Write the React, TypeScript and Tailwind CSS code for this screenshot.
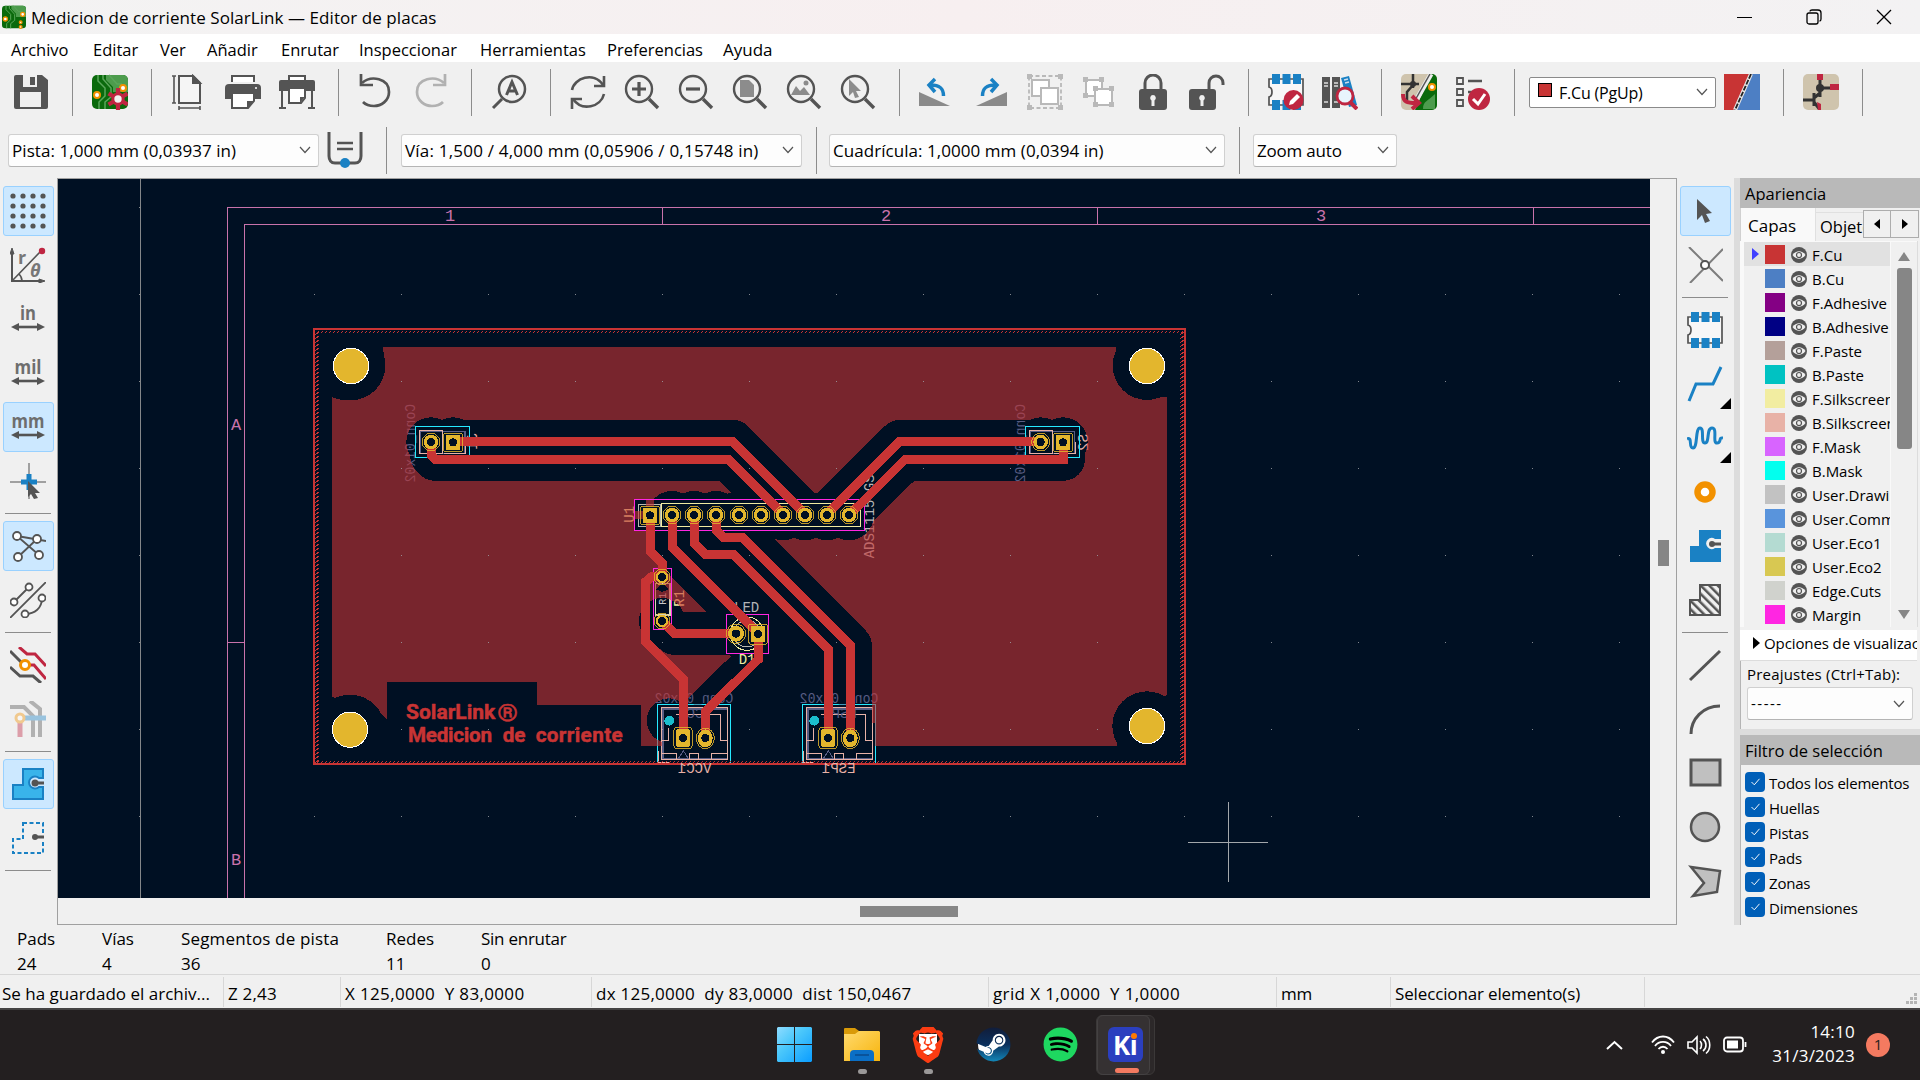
import React from "react";
import { FaSteam, FaSpotify } from "react-icons/fa";
import { SiBrave } from "react-icons/si";

const G = "#545454";
const B = "#1a81c4";
const R = "#bf2641";

function Ico({ children, dim, className = "" }: { children: React.ReactNode; dim?: boolean; className?: string }) {
  return (
    <svg viewBox="0 0 36 36" className={`h-9 w-9 shrink-0 ${dim ? "opacity-40" : ""} ${className}`} fill="none" stroke={G} strokeWidth="2">
      {children}
    </svg>
  );
}

/* ---------- top toolbar icons ---------- */
const SaveIcon = () => (
  <Ico>
    <path d="M1 3a2 2 0 0 1 2-2h26l6 5v27a2 2 0 0 1-2 2H3a2 2 0 0 1-2-2z" fill={G} stroke="none" />
    <path d="M10 1h14v12H10zM7 18h21v15H7z" fill="#efefef" stroke="none" />
    <path d="M17 3h5v8h-5z" fill={G} stroke="none" />
  </Ico>
);
const Traces = () => (
  <>
    <rect x="0" y="1" width="36" height="34" rx="5" fill="#0a6a0c" stroke="none" />
    <path d="M14 1v5l7 7v5h15V6a5 5 0 0 0-5-5z" fill="#4d9c4d" stroke="none" />
    <path d="M6 1v6l7 7v8l-6 6v7M11 1v4l8 9v9l-6 5v7M17 1l8 9h5" stroke="#5aa65a" strokeWidth="1.5" />
    <circle cx="5" cy="21" r="3" fill="#fff" stroke="#f29100" />
    <circle cx="31" cy="14" r="3" fill="#fff" stroke="#f29100" />
  </>
);
const BoardSetupIcon = () => (
  <Ico>
    <Traces />
    <g stroke={R} strokeWidth="4.200">
      <path d="M26 14v22M16.500 19.500l19 11M35.500 19.500l-19 11" />
    </g>
    <circle cx="26" cy="25" r="5.200" fill="#f2f2f2" stroke={R} strokeWidth="3" />
  </Ico>
);
const PageIcon = () => (
  <Ico>
    <g transform="translate(-2 0)">
      <path d="M10 2h14l7 7v20H10z" fill="#f5f5f5" />
      <path d="M24 2l7 7h-7z" fill={G} />
      <path d="M5 2v27M3 2h4M3 29h4M10 34h21M10 32v4M31 32v4" strokeWidth="1.6" />
    </g>
  </Ico>
);
const PrinterIcon = () => (
  <Ico>
    <path d="M7 8V2h22v6" fill="#fff" />
    <path d="M0 14a4 4 0 0 1 4-4h28a4 4 0 0 1 4 4v11H0z" fill={G} stroke="none" />
    <path d="M7 19h22v8l-6 7H7z" fill="#fff" />
    <path d="M29 27l-7 7v-7z" fill={G} stroke="none" />
    <circle cx="31" cy="14" r="1" fill="#fff" stroke="none" />
  </Ico>
);
const PlotterIcon = () => (
  <Ico>
    <path d="M10 8V2h16v6" fill="#fff" />
    <path d="M0 8a2 2 0 0 1 2-2h32a2 2 0 0 1 2 2v9H0z" fill={G} stroke="none" />
    <path d="M3 17v17M33 17v17M0 34h7M29 34h7" />
    <path d="M10 14h16v10l-4 5H10z" fill="#fff" />
    <path d="M26 23l-5 6v-6z" fill={G} stroke="none" />
  </Ico>
);
const UndoArrow = () => (
  <>
    <path d="M4 9C13 1 31 4 31 18c0 9-8 14-15 14-5 0-9-2-11-4" strokeWidth="2.700" />
    <path d="M3 0v11h12" strokeWidth="2.700" />
  </>
);
const UndoIcon = () => (
  <Ico>
    <UndoArrow />
  </Ico>
);
const RedoIcon = () => (
  <Ico dim>
    <g transform="translate(36 0) scale(-1 1)">
      <UndoArrow />
    </g>
  </Ico>
);
const FindIcon = () => (
  <Ico>
    <circle cx="21" cy="15" r="13" strokeWidth="2.500" />
    <path d="M11 25l-9 9" strokeWidth="3" />
    <path d="M15.500 21l5.500-13 5.500 13M17.500 17h7" strokeWidth="3" />
  </Ico>
);
const RefreshIcon = () => (
  <Ico>
    <path d="M2 16C4 4 24-3 33 11M34 20C31 33 12 38 3 25" strokeWidth="2.600" />
    <path d="M34 2v10H24M2 35V25h10" strokeWidth="2.600" />
  </Ico>
);
const Lens = ({ children }: { children: React.ReactNode }) => (
  <Ico>
    <circle cx="15" cy="15" r="13" strokeWidth="2.400" />
    <path d="M25 25l9 9" strokeWidth="3.400" />
    {children}
  </Ico>
);
const ZoomInIcon = () => (
  <Lens>
    <path d="M8 15h14M15 8v14" strokeWidth="3.200" />
  </Lens>
);
const ZoomOutIcon = () => (
  <Lens>
    <path d="M8 15h14" strokeWidth="3.200" />
  </Lens>
);
const ZoomPageIcon = () => (
  <Lens>
    <path d="M8 6h9l5 5v12H8z" fill="#8c8c8c" stroke="none" />
  </Lens>
);
const ZoomObjIcon = () => (
  <Lens>
    <path d="M5 21l5-9 4 5 4-4 6 8z" fill="#8c8c8c" stroke="none" />
    <circle cx="20" cy="9" r="2.500" fill="#8c8c8c" stroke="none" />
  </Lens>
);
const ZoomSelIcon = () => (
  <Lens>
    <path d="M9 5l12 12h-5l3 6-4 1-2-6-4 4z" fill="#8c8c8c" stroke="none" />
  </Lens>
);
const RotateShape = () => (
  <>
    <path d="M1 18v14h31z" fill="#8a8a8a" stroke="none" />
    <path d="M25.500 22c0-8-4-11-13-11" stroke={B} strokeWidth="3.500" />
    <path d="M17 5l-6 6 6 7" stroke={B} strokeWidth="3.500" />
  </>
);
const RotateLeftIcon = () => (
  <Ico>
    <g transform="translate(-1 0)">
      <RotateShape />
    </g>
  </Ico>
);
const RotateRightIcon = () => (
  <Ico>
    <g transform="translate(35 0) scale(-1 1)">
      <RotateShape />
    </g>
  </Ico>
);
const GroupIcon = () => (
  <Ico>
    <g stroke="#b9b9b9">
      <rect x="2" y="2" width="32" height="32" strokeDasharray="4 2.500" strokeWidth="1.800" />
      <rect x="5" y="6" width="17" height="16" fill="#fff" />
      <rect x="14" y="14" width="17" height="16" fill="#fff" />
    </g>
    <path d="M0 0h5v5H0zM31 0h5v5h-5zM0 31h5v5H0zM31 31h5v5h-5z" fill="#b9b9b9" stroke="none" />
  </Ico>
);
const UngroupIcon = () => (
  <Ico>
    <g stroke="#b9b9b9">
      <rect x="5" y="6" width="16" height="16" fill="#fff" />
      <rect x="14" y="15" width="17" height="16" fill="#fff" />
    </g>
    <path d="M2 3h5v5H2zM18 3h5v5h-5zM2 19h5v5H2zM12 12h5v5h-5zM28 12h5v5h-5zM12 28h5v5h-5zM28 28h5v5h-5z" fill="#b9b9b9" stroke="none" />
  </Ico>
);
const LockIcon = () => (
  <Ico>
    <path d="M10 16V9a8 8 0 0 1 16 0v7" strokeWidth="3" />
    <rect x="4" y="15" width="28" height="21" rx="3" fill={G} stroke="none" />
    <path d="M18 21a3 3 0 0 1 1.500 5.500V32h-3v-5.500A3 3 0 0 1 18 21z" fill="#efefef" stroke="none" />
  </Ico>
);
const UnlockIcon = () => (
  <Ico>
    <path d="M20 16V9a7 7 0 0 1 14 0v2" strokeWidth="3" />
    <rect x="0" y="15" width="27" height="21" rx="3" fill={G} stroke="none" />
    <path d="M13 21a3 3 0 0 1 1.500 5.500V32h-3v-5.500A3 3 0 0 1 13 21z" fill="#efefef" stroke="none" />
  </Ico>
);
const Footprint = () => (
  <>
    <path d="M1 5h34v26H1v-8c4-1 4-9 0-10z" fill="#f7f7f7" strokeWidth="1.700" />
    <path d="M4 0h8v10H4zM14.500 0h8v10h-8zM25 0h8v10h-8zM4 26h8v10H4zM14.500 26h8v10h-8zM25 26h8v10h-8z" fill={B} stroke="none" />
  </>
);
const FootprintEditIcon = () => (
  <Ico>
    <Footprint />
    <circle cx="25.500" cy="26" r="10" fill={R} stroke="none" />
    <path d="M21 31l1-4 7-7 3 3-7 7z" fill="#fff" stroke="none" />
  </Ico>
);
const LibraryIcon = () => (
  <Ico>
    <path d="M0 3h8v31H0zM10 3h8v31h-8z" fill={G} stroke="none" />
    <path d="M2 9h4M2 28h4M12 9h4M12 28h4M2 12h4M12 12h4" stroke="#ddd" strokeWidth="1.500" />
    <path d="M19 4l8-2 8 29-8 2z" fill={B} stroke="none" />
    <path d="M22 6l4-1M23 9l4-1" stroke="#cde" strokeWidth="1.500" />
    <circle cx="23" cy="22" r="8" fill="#e8f4fc" stroke={R} strokeWidth="2.800" />
    <path d="M28 28l7 7" stroke={R} strokeWidth="4" />
  </Ico>
);
const UpdatePcbIcon = () => (
  <Ico>
    <rect width="36" height="36" rx="5" fill="#cfc4ad" stroke="none" />
    <path d="M30 0h1a5 5 0 0 1 5 5v26a5 5 0 0 1-5 5H14z" fill="#0a6a0c" stroke="none" />
    <path d="M34 20v15H22c0-8 5-8 12-15z" fill="#4d9c4d" stroke="none" />
    <path d="M12 0v14M0 10h12l6 0M12 11l-6 7v8" stroke="#333" strokeWidth="2.500" />
    <circle cx="12" cy="10" r="3" fill="#333" stroke="none" />
    <path d="M30 0L13 30" stroke="#eee" strokeWidth="5" />
    <path d="M29 0L13 28" stroke="#555" strokeWidth="1.500" />
    <circle cx="31" cy="13" r="3" fill="#fff" stroke="#f29100" />
    <path d="M2 20c0 8 4 9 13 9M11 22l7 7-7 6" stroke={R} strokeWidth="4" />
  </Ico>
);
const DrcIcon = () => (
  <Ico>
    <path d="M2 4h6v6H2zM2 15h6v6H2zM2 26h6v6H2z" strokeWidth="1.800" />
    <path d="M13 7h14M13 18h5" strokeWidth="2.400" />
    <circle cx="24" cy="25" r="11" fill={R} stroke="none" />
    <path d="M18 25l5 5 7-10" stroke="#fff" strokeWidth="3" />
  </Ico>
);
const LayerPairIcon = () => (
  <Ico>
    <path d="M0 0h28L10 36H0z" fill="#c83434" stroke="none" />
    <path d="M28 0h8v36H10z" fill="#4d7fc4" stroke="none" />
    <path d="M27 0L11 36" stroke="#e8e8e8" strokeWidth="4" />
    <path d="M27 0L11 36" stroke="#222" strokeWidth="1.800" strokeDasharray="5 1.500" />
  </Ico>
);
const ConsoleIcon = () => (
  <Ico>
    <rect width="36" height="36" rx="5" fill="#cfc4ad" stroke="none" />
    <path d="M17 5v18M17 14h12M0 26h12M11 19v13M11 24l6-5M11 28l6 8" stroke="#333" strokeWidth="3" />
    <circle cx="17" cy="14" r="4" fill="#333" stroke="none" />
    <path d="M14 0h6v6h-6zM27 10h9v6h-9zM14 28l4 2v6h-3z" fill={R} stroke="none" />
  </Ico>
);
const TrackAutoIcon = () => (
  <Ico>
    <path d="M2 0v24c0 4 2 7 6 7h20c4 0 6-3 6-7V0" strokeWidth="3" />
    <path d="M10 11h16M10 17h16" strokeWidth="2.400" />
    <circle cx="18" cy="31" r="5" fill={B} stroke="none" />
  </Ico>
);

/* ---------- side toolbar icons ---------- */
const GridIcon = () => (
  <Ico>
    {[3, 13, 23, 33].map((y) => [3, 13, 23, 33].map((x) => <circle key={`${x}-${y}`} cx={x} cy={y} r="2.600" fill={G} stroke="none" />))}
  </Ico>
);
const PolarIcon = () => (
  <Ico>
    <path d="M2 4v30h29" />
    <path d="M0 7l2-6 2 6zM29 32l6 2-6 2z" fill={G} stroke={G} strokeWidth="1" />
    <path d="M2 34L30 5M9 27c2 2 3 4 3 7" strokeWidth="1.600" />
    <circle cx="32" cy="4" r="3.200" fill={R} stroke="none" />
    <text x="8" y="17" className="font-['Open_Sans'] text-[18px] font-bold" fill="#777" stroke="none">r</text>
    <text x="20" y="30" className="font-['Open_Sans'] text-[18px] font-bold italic" fill="#777" stroke="none">θ</text>
  </Ico>
);
const UnitIcon = ({ t, len }: { t: string; len: number }) => (
  <Ico>
    <text x="18" y="19" textAnchor="middle" textLength={len} lengthAdjust="spacingAndGlyphs" className="font-['Open_Sans'] text-[19px] font-bold" fill="#6e6e6e" stroke="none">{t}</text>
    <path d="M5 26h26" strokeWidth="2.600" />
    <path d="M1 26l8-4v8zM35 26l-8-4v8z" fill={G} stroke="none" />
  </Ico>
);
const CursorIcon = () => (
  <Ico>
    <path d="M19 0v36M0 19h36" stroke="#a0a0a0" />
    <path d="M19 11v16M11 19h16" stroke={B} strokeWidth="5" />
    <path d="M18 18l12 12h-5l3 5-4 1-3-5-3 3z" fill={G} stroke="none" />
  </Ico>
);
const RatsnestIcon = () => (
  <Ico>
    <path d="M7 8l22 19M8 29L27 11M7 8l29 5" strokeWidth="1.800" />
    {[[7, 8], [27, 11], [8, 29], [29, 27]].map(([x, y]) => <circle key={y} cx={x} cy={y} r="4" fill="#fff" strokeWidth="1.800" />)}
  </Ico>
);
const CurvedRatsIcon = () => (
  <Ico>
    <path d="M0 36L36 0M4 20L19 5M15 32c10 0 17-6 17-16" strokeWidth="1.800" />
    {[[4, 20], [19, 5], [15, 32], [32, 16]].map(([x, y]) => <circle key={y} cx={x} cy={y} r="3.500" fill="#fff" strokeWidth="1.800" />)}
  </Ico>
);
const NetColorIcon = () => (
  <Ico>
    <path d="M0 4l14 14M0 20l10 9h13l8 7" strokeWidth="3" />
    <path d="M9 0l8 7h8l11 12M15 18h9l12 14" stroke={R} strokeWidth="3" />
    <circle cx="15" cy="18" r="4.500" fill="#fff" stroke="#f29100" strokeWidth="3" />
  </Ico>
);
const ContrastIcon = () => (
  <Ico dim>
    <path d="M0 6h14l9 9v21M20 0l10 8v28" strokeWidth="4" />
    <path d="M10 17v19" stroke={R} strokeWidth="5" />
    <path d="M10 17h26" stroke={B} strokeWidth="5" />
    <circle cx="10" cy="17" r="4" fill="#fff" stroke="#f29100" strokeWidth="3" />
  </Ico>
);
const ZoneIcon = () => (
  <Ico>
    <path d="M13 3h20v9h-4a6 6 0 1 0 0 9h4v12H3V19h10z" fill="#39b4ea" stroke={B} />
    <circle cx="25" cy="17" r="3.500" fill={G} stroke="none" />
    <path d="M25 17h9" strokeWidth="3" />
  </Ico>
);
const ZoneOutlineIcon = () => (
  <Ico>
    <path d="M13 3h20v30H3V19h10z" stroke={B} strokeDasharray="4 2.500" />
    <path d="M22 13h13v8H22z" fill="#f0f0f0" stroke="none" />
    <circle cx="25" cy="17" r="3" fill={G} stroke="none" />
    <path d="M25 17h9" strokeWidth="3" />
  </Ico>
);
const ArrowIcon = () => (
  <Ico>
    <path d="M10 6l15 14-6 1 4 7-5 2-3-8-5 5z" fill={G} stroke="none" />
  </Ico>
);
const HighlightNetIcon = () => (
  <Ico>
    <path d="M2 0l34 34M36 2L3 36" stroke="#7d7d7d" />
    <circle cx="18" cy="18" r="4" fill="#fff" />
  </Ico>
);
const FootprintIcon = () => (
  <Ico>
    <Footprint />
  </Ico>
);
const RouteIcon = () => (
  <Ico>
    <path d="M2 35l7-17h17l8-17" stroke={B} strokeWidth="3" />
  </Ico>
);
const TuneIcon = () => (
  <Ico>
    <path d="M0 19c6-3 1 9 6 9s2-20 7-20 0 15 5 15 1-15 7-15 0 15 5 15 1-6 6-5" stroke={B} strokeWidth="3" />
  </Ico>
);
const ViaIcon = () => (
  <Ico>
    <circle cx="18" cy="18" r="7.500" fill="#fff" stroke="#f29100" strokeWidth="6.500" />
  </Ico>
);
const AddZoneIcon = () => (
  <Ico>
    <path d="M12 2h22v9h-6a5.500 5.500 0 1 0 0 9h6v14H3V18h9z" fill={B} stroke="none" />
    <circle cx="25" cy="16" r="3" fill={G} stroke="none" />
    <path d="M25 16h9" strokeWidth="3" />
  </Ico>
);
const RuleAreaIcon = () => (
  <Ico>
    <defs>
      <pattern id="hatch" width="6" height="6" patternUnits="userSpaceOnUse" patternTransform="rotate(-45)">
        <path d="M0 0v6" stroke={G} strokeWidth="5" />
      </pattern>
    </defs>
    <path d="M13 3h20v30H3V18h10z" fill="url(#hatch)" strokeWidth="2" />
  </Ico>
);
const LineIcon = () => (
  <Ico>
    <path d="M3 33L33 4" strokeWidth="3" />
  </Ico>
);
const ArcIcon = () => (
  <Ico>
    <path d="M4 33C4 18 16 5 33 5" strokeWidth="3" />
  </Ico>
);
const RectIcon = () => (
  <Ico>
    <path d="M4 5h29v25H4z" fill="#c0c0c0" strokeWidth="3" />
  </Ico>
);
const CircleIcon = () => (
  <Ico>
    <circle cx="18" cy="18" r="14" fill="#c0c0c0" strokeWidth="2.500" />
  </Ico>
);
const PolyIcon = () => (
  <Ico>
    <path d="M4 4l29 4-3 21L6 33l11-13z" fill="#c0c0c0" strokeWidth="2.500" />
  </Ico>
);

/* ---------- common widgets ---------- */
const Cell = ({ children }: { children: React.ReactNode }) => <div className="flex h-[54px] w-[54px] shrink-0 items-center justify-center">{children}</div>;
const VSep = () => (
  <div className="flex w-[25px] shrink-0 justify-center pl-[3px]">
    <div className="h-[47px] w-px bg-[#8c8c8c]" />
  </div>
);
const HSep = () => (
  <div className="flex h-[11px] w-full items-center px-[5px]">
    <div className="h-px w-full bg-[#8c8c8c]" />
  </div>
);
const Tool = ({ children, on, corner }: { children: React.ReactNode; on?: boolean; corner?: boolean }) => (
  <div className="flex h-[54px] items-center justify-center">
    <div className={`relative flex h-[50px] w-[51px] items-center justify-center rounded-[3px] border ${on ? "border-[#99d1ff] bg-[#cce8ff]" : "border-transparent"}`}>
      {children}
      {corner && (
        <svg viewBox="0 0 11 11" className="absolute -right-px bottom-[-1px] h-[11px] w-[11px]">
          <path d="M11 0v11H0z" fill="#000" />
        </svg>
      )}
    </div>
  </div>
);
const Chevron = () => (
  <svg viewBox="0 0 12 8" className="h-2 w-3 shrink-0" fill="none" stroke="#555" strokeWidth="1.200">
    <path d="M1 1l5 5.500L11 1" />
  </svg>
);
const Combo = ({ children, className }: { children: React.ReactNode; className: string }) => (
  <div className={`flex h-[33px] shrink-0 items-center justify-between whitespace-nowrap rounded-[3px] border border-[#d0d0d0] border-b-[#b4b4b4] bg-[#fdfdfd] pl-[3px] pr-[7px] ${className}`}>
    <span>{children}</span>
    <Chevron />
  </div>
);

/* ---------- board canvas ---------- */
const tracks = [
  "M459 394H1298L1515 612",
  "M393 396L395 437L405 448H1284L1449 613",
  "M2222 394H1800L1581 613",
  "M2289 396L2290 448H1816L1650 613",
  "M1117 615V712L1374 969",
  "M1183 615V700L1218 734H1300L1585 1019V1284",
  "M1249 615V662L1271 683H1327L1651 1007V1284",
  "M1086 933L1124 970H1308",
  "M1376 971V1047L1216 1205V1284",
];
const powerTracks = ["M1051 615V725L1088 762V800", "M1086 800H1055L1036 816V995L1150 1108V1284"];
const headerPads = [1116, 1182, 1248, 1317, 1383, 1449, 1515, 1581, 1647];
const BG = "#001023";

const RoundPad = ({ x, y, r = 22 }: { x: number; y: number; r?: number }) => (
  <g>
    <circle cx={x} cy={y} r={r} fill="#e3b62d" />
    <circle cx={x} cy={y} r={r + 5} fill="none" stroke="#e3b62d" strokeWidth="2.500" />
    <circle cx={x} cy={y} r="12" fill={BG} />
  </g>
);
const SquarePad = ({ x, y, h = 22, rx = 0 }: { x: number; y: number; h?: number; rx?: number }) => (
  <g>
    <rect x={x - 22} y={y - h} width="44" height={h * 2} rx={rx} fill="#e3b62d" />
    <rect x={x - 28} y={y - h - 6} width="56" height={h * 2 + 12} rx={rx + 5} fill="none" stroke="#e3b62d" strokeWidth="2.500" />
    <circle cx={x} cy={y} r="12" fill={BG} />
  </g>
);

/* Two-pin JST connector on the back side; origin at the courtyard's top left corner. */
const Jst = ({ x, name }: { x: number; name: string }) => (
  <g transform={`translate(${x} 1183)`} fill="none" strokeWidth="3">
    <rect x="0" y="0" width="219" height="176" stroke="#26e9ff" />
    <rect x="16" y="13" width="193" height="150" stroke="#585d84" strokeWidth="5" />
    <rect x="12" y="9" width="198" height="156" stroke="#e8b2a7" />
    <path d="M56 30h133v78h20M31 70v38H12M12 147h45v16M96 163v-16h27v16M162 163v-16h48M3 140v34h30" stroke="#e8b2a7" />
    <path d="M62 163l15-24 15 24" stroke="#585d84" />
    <g transform="translate(109 -5) scale(-1 1)" stroke="none">
      <text textAnchor="middle" textLength="236" lengthAdjust="spacingAndGlyphs" className="font-['Liberation_Mono'] text-[42px]" fill="#585d84">Conn_01x02</text>
    </g>
    <g transform="translate(112 42) scale(-1 1)" stroke="none">
      <text textAnchor="middle" className="font-['Liberation_Mono'] text-[42px]" fill="#585d84">{name}</text>
    </g>
  </g>
);

const PinHeaderOutline = ({ x }: { x: number }) => (
  <g fill="none" strokeWidth="3">
    <rect x={x} y="349" width="161" height="93" stroke="#26e9ff" />
    <rect x={x + 14} y="365" width="134" height="65" stroke="#585d84" strokeWidth="4" />
    <path d={`M${x + 12} 361h69v69h-69zM${x + 85} 430h64v-34`} stroke="#e8b2a7" />
  </g>
);

const BackText = ({ x }: { x: number }) => (
  <g transform={`translate(${x} 282) rotate(-90) scale(-1 1)`}>
    <text textLength="235" lengthAdjust="spacingAndGlyphs" className="font-['Liberation_Mono'] text-[42px]" fill="#585d84">Conn_01x02</text>
  </g>
);

function Board() {
  const hatchT: number[] = [];
  for (let i = 52; i < 2645; i += 12) hatchT.push(i);
  const hatchL: number[] = [];
  for (let i = 66; i < 1356; i += 12) hatchL.push(i);
  const dots: [number, number][] = [];
  for (let x = 314; x < 1650; x += 87) for (let y = 294; y < 898; y += 87) dots.push([x, y]);
  return (
    <svg viewBox="58 179 1592 719" className="block h-[719px] w-[1592px] bg-[#001023]" shapeRendering="crispEdges">
      <defs>
        <mask id="pour" maskUnits="userSpaceOnUse" x="0" y="0" width="2700" height="1400">
          <rect x="96" y="111" width="2505" height="1197" fill="#fff" />
          <g fill="#000">
            <path d="M248 100h-152v162l30 8 130-90zM2447 100h155v162l-60 0-90-60zM96 1162v150h165v-82l-60-60zM2601 1155v155h-150l0-90z" />
            <circle cx="152" cy="167" r="104" />
            <circle cx="150" cy="1259" r="105" />
            <circle cx="2541" cy="167" r="103" />
            <circle cx="2541" cy="1248" r="104" />
            <path d="M261 1116h450v69h312v135H261z" />
            <path d="M1183 700L1374 969V1047L1216 1205V1320H1590V1019L1300 734z" />
            <path d="M1590 1240h135v80h-135z" />
            <rect x="1005" y="568" width="90" height="94" rx="8" />
            <circle cx="1107" cy="1232" r="67" />
            <path d="M1085 1215h150v110h-150z" />
            <circle cx="1216" cy="1284" r="72" />
            <circle cx="1651" cy="1284" r="72" />
            <circle cx="1107" cy="590" r="40" />
            {headerPads.map((x) => <circle key={x} cx={x} cy="617" r="74" />)}
            {[393, 459, 2222, 2289].map((x) => <circle key={x} cx={x} cy="396" r="74" />)}
            <circle cx="1086" cy="933" r="69" />
            <circle cx="1308" cy="971" r="68" />
            <circle cx="1374" cy="971" r="68" />
            <path d="M1068 838l19-18 19 18-19 8z" />
          </g>
          <g fill="none" stroke="#000" strokeWidth="129" strokeLinejoin="round" strokeLinecap="round">
            {tracks.map((d) => <path key={d} d={d} />)}
          </g>
          <path d="M1003 603h28v24h-28zM1038 566h24v24h-24z" fill="#fff" />
        </mask>
      </defs>
      <g fill="none" stroke="#c872ab" strokeWidth="1">
        <path d="M227.500 898V207.500H1650M244.500 898V224.500H1650M662.500 207.500v17M1097.500 207.500v17M1533.500 207.500v17M227.500 642.500h17" />
      </g>
      <path d="M140.500 179v719" stroke="#84878a" strokeWidth="1" />
      {[207, 294, 381, 468, 555, 642, 729, 816].map((y) => <rect key={y} x="139" y={y} width="1" height="1" fill="#84878a" />)}
      <g className="font-['Liberation_Mono'] text-[17px]" fill="#c872ab" textAnchor="middle">
        <text x="450" y="221">1</text>
        <text x="886" y="221">2</text>
        <text x="1321" y="221">3</text>
        <text x="236" y="430">A</text>
        <text x="236" y="865">B</text>
      </g>

      <g transform="translate(300 310) scale(.33333333)">
        <BackText x={346} />
        <BackText x={2174} />
        <g fill="none" strokeWidth="3">
          <rect x="1015" y="583" width="66" height="67" stroke="#b9b9b0" />
          <rect x="1084" y="581" width="597" height="68" stroke="#f0eba0" />
          <rect x="1066" y="820" width="44" height="94" stroke="#d8d6b4" strokeWidth="5" />
          <circle cx="1341" cy="971" r="50" stroke="#f0eba0" />
          <circle cx="1341" cy="971" r="40" stroke="#b9b9b0" />
        </g>
        <g className="font-['Liberation_Mono'] text-[42px]">
          <text transform="translate(1098 884) rotate(-90)" className="text-[30px]" fill="#c9c9c9">R1</text>
          <text transform="translate(1152 890) rotate(-90)" fill="#f2eda1">R1</text>
          <text transform="translate(1001 638) rotate(-90)" fill="#f2eda1">U1</text>
          <text transform="translate(1723 745) rotate(-90)" textLength="252" lengthAdjust="spacingAndGlyphs" fill="#b9b9b9">ADS1115 GS</text>
          <text x="1302" y="905" fill="#b3b5b8">LED</text>
          <text x="1316" y="1062" fill="#f2eda1">D1</text>
          <text transform="translate(532 418) rotate(-90) scale(-1 1)" textAnchor="end" fill="#e8b2a7">J1</text>
          <text transform="translate(2363 372) rotate(-90) scale(-1 1)" fill="#e8b2a7">S2</text>
        </g>
        <Jst x={1073} name="VCC1" />
        <Jst x={1508} name="ESP1" />
        <PinHeaderOutline x={347} />
        <PinHeaderOutline x={2176} />
        <rect x="90" y="105" width="2520" height="1210" fill="#c83434" opacity=".6" mask="url(#pour)" />
        <g fill="none" stroke="#ff26e2" strokeWidth="3">
          <rect x="1004" y="569" width="690" height="92" />
          <rect x="1061" y="776" width="53" height="182" />
          <rect x="1279" y="913" width="127" height="117" />
        </g>
      </g>

      <g fill="#a0a3a8" opacity=".8">
        {dots.map(([x, y]) => <rect key={`${x}-${y}`} x={x} y={y} width="1" height="1" />)}
      </g>

      <g transform="translate(300 310) scale(.33333333)">
        <g fill="none" stroke="#c83434" strokeWidth="27" strokeLinejoin="miter">
          {tracks.map((d) => <path key={d} d={d} />)}
          {powerTracks.map((d) => <path key={d} d={d} />)}
        </g>
        <circle cx="1108" cy="1232" r="15" fill="#1bbecd" />
        <circle cx="1543" cy="1232" r="15" fill="#1bbecd" />
        <RoundPad x={393} y={396} />
        <SquarePad x={459} y={397} />
        <RoundPad x={2222} y={396} />
        <SquarePad x={2289} y={397} />
        <SquarePad x={1050} y={616} />
        {headerPads.map((x) => <RoundPad key={x} x={x} y={615} />)}
        <RoundPad x={1086} y={801} r={19} />
        <RoundPad x={1086} y={933} r={19} />
        <RoundPad x={1308} y={971} r={24} />
        <SquarePad x={1374} y={972} h={24} />
        {[1149, 1584].map((x) => <SquarePad key={x} x={x} y={1284} h={26} rx={6} />)}
        {[1216, 1651].map((x) => (
          <g key={x}>
            <ellipse cx={x} cy="1285" rx="22" ry="27" fill="#e3b62d" />
            <ellipse cx={x} cy="1285" rx="27" ry="31" fill="none" stroke="#e3b62d" strokeWidth="2.500" />
            <circle cx={x} cy="1284" r="12" fill={BG} />
          </g>
        ))}
        <g fill="#e3b62d" stroke="#fff" strokeWidth="3">
          <circle cx="153" cy="168" r="53" />
          <circle cx="150" cy="1259" r="53" />
          <circle cx="2541" cy="168" r="53" />
          <circle cx="2541" cy="1248" r="53" />
        </g>
        <g fill="none" stroke="#c83434">
          <rect x="42" y="57" width="2613" height="1305" strokeWidth="6" />
          <g strokeWidth="3">
            {hatchT.map((x) => <path key={x} d={`M${x} 67l6-5M${x} 1358l6-5`} />)}
            {hatchL.map((y) => <path key={y} d={`M46 ${y + 8}l10-8M2641 ${y + 8}l10-8`} />)}
          </g>
        </g>
        <g className="font-['Roboto'] font-bold" fill="#c83434" stroke="#c83434" strokeWidth="1.500" strokeLinejoin="round">
          <text x="318" y="1226" textLength="268" className="text-[63px]">SolarLink</text>
          <text x="592" y="1232" textLength="62" lengthAdjust="spacingAndGlyphs" className="text-[74px]">®</text>
          <text x="324" y="1295" textLength="252" className="text-[62px]">Medicion</text>
          <text x="608" y="1295" textLength="68" className="text-[62px]">de</text>
          <text x="707" y="1295" textLength="261" className="text-[62px]">corriente</text>
        </g>
        <g className="font-['Liberation_Mono'] text-[42px]" fill="#e8b2a7">
          <g transform="translate(1184 1390) scale(-1 1)"><text textAnchor="middle">VCC1</text></g>
          <g transform="translate(1616 1390) scale(-1 1)"><text textAnchor="middle">ESP1</text></g>
        </g>
      </g>
      <path d="M1188 842.500h80M1228.500 802v80" stroke="#a3a7ab" strokeWidth="1" />
    </svg>
  );
}

/* ---------- appearance panel ---------- */
const layers: [string, string][] = [
  ["F.Cu", "bg-[#c83434]"],
  ["B.Cu", "bg-[#4d7fc4]"],
  ["F.Adhesive", "bg-[#840084]"],
  ["B.Adhesive", "bg-[#000084]"],
  ["F.Paste", "bg-[#b4a09a]"],
  ["B.Paste", "bg-[#00c2c2]"],
  ["F.Silkscreen", "bg-[#f2eda1]"],
  ["B.Silkscreen", "bg-[#e8b2a7]"],
  ["F.Mask", "bg-[#d864ff]"],
  ["B.Mask", "bg-[#02ffee]"],
  ["User.Drawings", "bg-[#c2c2c2]"],
  ["User.Comments", "bg-[#5994dc]"],
  ["User.Eco1", "bg-[#b4dbd2]"],
  ["User.Eco2", "bg-[#d8c852]"],
  ["Edge.Cuts", "bg-[#d0d2cd]"],
  ["Margin", "bg-[#ff26e2]"],
];
const Eye = () => (
  <svg viewBox="0 0 16 16" className="mt-[2px] h-4 w-4 shrink-0">
    <circle cx="8" cy="8" r="8" fill="#545454" />
    <path d="M1.500 8C5 3 11 3 14.500 8 11 13 5 13 1.500 8z" fill="#efefef" />
    <circle cx="8" cy="8" r="2.500" fill="none" stroke="#545454" strokeWidth="1.200" />
  </svg>
);

function RightPanel() {
  return (
    <div className="flex w-[186px] shrink-0 flex-col border-l-[6px] border-[#dcdcdc] text-[15px]">
      <div className="flex h-[30px] shrink-0 items-center bg-[#b9b9b9] pl-[5px] pt-[2px] text-[16.500px]">Apariencia</div>
      <div className="flex h-[33px] shrink-0 items-end border-l border-[#d0d0d0]">
        <div className="flex h-[33px] w-[75px] shrink-0 items-center border-r border-[#e0e0e0] bg-[#f9f9f9] pl-[7px] pt-px text-[17px]">Capas</div>
        <div className="flex h-[29px] w-[47px] shrink-0 items-center overflow-hidden border-t border-[#e0e0e0] pl-[4px] pt-px text-[16.500px]">Objetos</div>
        <div className="mb-[3px] flex h-7 w-7 shrink-0 items-center justify-center border border-[#adadad] bg-[#f0f0f0]">
          <svg viewBox="0 0 6 10" className="h-[10px] w-[6px]"><path d="M6 0v10L0 5z" /></svg>
        </div>
        <div className="mb-[3px] flex h-7 w-[28px] shrink-0 items-center justify-center border border-l-0 border-[#adadad] bg-[#f0f0f0]">
          <svg viewBox="0 0 6 10" className="h-[10px] w-[6px]"><path d="M0 0v10l6-5z" /></svg>
        </div>
      </div>
      <div className="mr-[2px] flex h-[386px] shrink-0 border-r border-[#dcdcdc] bg-[#f9f9f9] pl-1 pt-px">
        <div className="w-[146px] shrink-0 overflow-hidden bg-[#f0f0f0]">
          {layers.map(([name, color], i) => (
            <div key={name} className={`flex h-6 items-center whitespace-nowrap ${i === 0 ? "bg-[#e1e1e1]" : ""}`}>
              <div className="flex w-[21px] shrink-0 justify-end pb-px pr-[6px]">
                {i === 0 && <svg viewBox="0 0 7 12" className="h-3 w-[7px]"><path d="M0 0l7 6-7 6z" fill="#4040ff" /></svg>}
              </div>
              <div className={`mr-[6px] h-[19px] w-5 shrink-0 ${color}`} />
              <Eye />
              <span className="pl-[5px] pt-[3px]">{name}</span>
            </div>
          ))}
        </div>
        <div className="ml-px flex flex-1 flex-col items-center justify-between bg-[#f0f0f0] pb-2 pt-[10px]">
          <div className="flex flex-col items-center gap-[7px]">
            <svg viewBox="0 0 12 9" className="h-[9px] w-3"><path d="M6 0l6 9H0z" fill="#868686" /></svg>
            <div className="h-[181px] w-[15px] rounded-[3px] bg-[#868686]" />
          </div>
          <svg viewBox="0 0 12 9" className="h-[9px] w-3"><path d="M6 9l6-9H0z" fill="#868686" /></svg>
        </div>
      </div>
      <div className="mr-[3px] flex h-[34px] shrink-0 items-center overflow-hidden whitespace-nowrap border-b border-[#dcdcdc] border-t-[3px] border-t-[#f0f0f0] bg-white pb-[4px] pl-[13px] tracking-[-.1px]">
        <svg viewBox="0 0 7 12" className="mr-1 h-3 w-[7px] shrink-0"><path d="M0 0l7 6-7 6z" /></svg>
        Opciones de visualización
      </div>
      <div className="flex h-[68px] shrink-0 flex-col border-l border-[#b4b4b4] pl-[6px]">
        <div className="flex h-[26px] items-center tracking-[.2px]">Preajustes (Ctrl+Tab):</div>
        <Combo className="w-[166px] tracking-[1.500px]">-----</Combo>
      </div>
      <div className="flex h-9 shrink-0 items-center border-t-[6px] border-[#dcdcdc] bg-[#b9b9b9] pl-[5px] pt-[2px] text-[16.500px]">Filtro de selección</div>
      <div className="flex flex-1 flex-col border-l border-[#b4b4b4] pl-1 pt-[5px]">
        {["Todos los elementos", "Huellas", "Pistas", "Pads", "Zonas", "Dimensiones"].map((t) => (
          <div key={t} className="flex h-[25px] items-center whitespace-nowrap">
            <div className="mb-[1px] mr-1 flex h-5 w-5 shrink-0 items-center justify-center rounded-[4px] bg-[#005fb8]">
              <svg viewBox="0 0 12 10" className="h-[8px] w-[11px]" fill="none" stroke="#fff" strokeWidth="1.200"><path d="M1 5l3.500 3.500L11 1" /></svg>
            </div>
            <span className="pt-[2px] tracking-[-.2px]">{t}</span>
          </div>
        ))}
      </div>
    </div>
  );
}

const menu: [string, string][] = [
  ["Archivo", "w-[82px]"],
  ["Editar", "w-[67px]"],
  ["Ver", "w-[47px]"],
  ["Añadir", "w-[74px]"],
  ["Enrutar", "w-[78px]"],
  ["Inspeccionar", "w-[121px]"],
  ["Herramientas", "w-[127px]"],
  ["Preferencias", "w-[116px]"],
  ["Ayuda", "w-[60px] text-[17px]"],
];
const info: [string, string, string][] = [
  ["Pads", "24", "w-[85px]"],
  ["Vías", "4", "w-[79px]"],
  ["Segmentos de pista", "36", "w-[205px] tracking-[.15px]"],
  ["Redes", "11", "w-[95px]"],
  ["Sin enrutar", "0", "w-[120px] tracking-[-.25px]"],
];
const status: [string, string][] = [
  ["Se ha guardado el archiv...", "w-[224px] pl-[2px]"],
  ["Z 2,43", "w-[117px] pl-1 tracking-[.2px]"],
  ["X 125,0000  Y 83,0000", "w-[251px] pl-1 tracking-[.35px]"],
  ["dx 125,0000  dy 83,0000  dist 150,0467", "w-[397px] pl-1 tracking-[.26px]"],
  ["grid X 1,0000  Y 1,0000", "w-[288px] pl-1 tracking-[.38px]"],
  ["mm", "w-[114px] pl-1 tracking-[-.2px]"],
  ["Seleccionar elemento(s)", "w-[254px] pl-1 tracking-[-.14px]"],
];

export default function App() {
  return (
    <div className="flex h-[1080px] w-[1920px] flex-col overflow-hidden bg-[#f0f0f0] font-['Open_Sans',sans-serif] text-[16.500px] leading-none text-black">
      <header className="flex h-[34px] shrink-0 items-center justify-between bg-linear-to-r from-[#f3f3f3] via-[#f7eff0] to-[#f3f2f3]">
        <div className="flex items-center gap-[5px] pl-[2px]">
          <svg viewBox="0 0 36 36" className="h-6 w-6" fill="none" strokeWidth="2">
            <Traces />
            <circle cx="28" cy="26" r="2" fill="#fff" stroke="#f29100" />
            <circle cx="28" cy="33" r="2" fill="#fff" stroke="#f29100" />
          </svg>
          <span className="text-[17px] tracking-[.06px]">Medicion de corriente SolarLink — Editor de placas</span>
        </div>
        <div className="flex items-center gap-[54px] pr-[28px]">
          <div className="h-px w-[15px] bg-black" />
          <svg viewBox="0 0 16 16" className="h-4 w-4" fill="none" stroke="#000" strokeWidth="1.300">
            <rect x="1" y="4" width="11" height="11" rx="2" />
            <path d="M4 2.500C4 1.500 5 1 6 1h6c2 0 3 1 3 3v6c0 1-.5 2-1.500 2" />
          </svg>
          <svg viewBox="0 0 16 16" className="h-4 w-4" fill="none" stroke="#000" strokeWidth="1.300"><path d="M1 1l14 14M15 1L1 15" /></svg>
        </div>
      </header>

      <nav className="flex h-7 shrink-0 items-center bg-white pl-[11px] pt-[3px]">
        {menu.map(([t, w]) => <span key={t} className={`shrink-0 leading-5 ${w}`}>{t}</span>)}
      </nav>

      <div className="flex h-[60px] shrink-0 items-center pl-1">
        <Cell><SaveIcon /></Cell>
        <VSep />
        <Cell><BoardSetupIcon /></Cell>
        <VSep />
        <Cell><PageIcon /></Cell>
        <Cell><PrinterIcon /></Cell>
        <Cell><PlotterIcon /></Cell>
        <VSep />
        <Cell><UndoIcon /></Cell>
        <Cell><RedoIcon /></Cell>
        <VSep />
        <Cell><FindIcon /></Cell>
        <VSep />
        <Cell><RefreshIcon /></Cell>
        <Cell><ZoomInIcon /></Cell>
        <Cell><ZoomOutIcon /></Cell>
        <Cell><ZoomPageIcon /></Cell>
        <Cell><ZoomObjIcon /></Cell>
        <Cell><ZoomSelIcon /></Cell>
        <VSep />
        <Cell><RotateLeftIcon /></Cell>
        <Cell><RotateRightIcon /></Cell>
        <Cell><GroupIcon /></Cell>
        <Cell><UngroupIcon /></Cell>
        <Cell><LockIcon /></Cell>
        <Cell><UnlockIcon /></Cell>
        <VSep />
        <Cell><FootprintEditIcon /></Cell>
        <Cell><LibraryIcon /></Cell>
        <VSep />
        <Cell><UpdatePcbIcon /></Cell>
        <Cell><DrcIcon /></Cell>
        <VSep />
        <div className="ml-1 mr-2 flex h-[31px] w-[187px] shrink-0 items-center rounded-[2px] border border-[#8a8a8a] bg-white pl-2 pr-[7px] text-[16px]">
          <div className="mb-1 mr-[7px] h-[14px] w-[14px] border border-black bg-[#c83434]" />
          <span className="flex-1 pt-[2px] tracking-[-.2px]">F.Cu (PgUp)</span>
          <Chevron />
        </div>
        <LayerPairIcon />
        <div className="w-[9px]" />
        <VSep />
        <div className="w-[9px]" />
        <ConsoleIcon />
        <div className="w-[9px]" />
        <VSep />
      </div>

      <div className="flex h-14 shrink-0 items-center pl-2 text-[17px]">
        <Combo className="w-[311px] tracking-[.06px]">Pista: 1,000 mm (0,03937 in)</Combo>
        <div className="ml-2"><TrackAutoIcon /></div>
        <div className="ml-[9px]"><VSep /></div>
        <Combo className="ml-1 w-[401px] tracking-[.21px]">Vía: 1,500 / 4,000 mm (0,05906 / 0,15748 in)</Combo>
        <VSep />
        <Combo className="ml-[2px] w-[396px] tracking-[.05px]">Cuadrícula: 1,0000 mm (0,0394 in)</Combo>
        <VSep />
        <Combo className="ml-[3px] w-[144px] tracking-[-.2px]">Zoom auto</Combo>
      </div>

      <main className="flex h-[747px] shrink-0">
        <div className="flex w-[57px] shrink-0 flex-col pr-px pt-[6px]">
          <Tool on><GridIcon /></Tool>
          <Tool><PolarIcon /></Tool>
          <Tool><UnitIcon t="in" len={16} /></Tool>
          <Tool><UnitIcon t="mil" len={27} /></Tool>
          <Tool on><UnitIcon t="mm" len={33} /></Tool>
          <Tool><CursorIcon /></Tool>
          <HSep />
          <Tool on><RatsnestIcon /></Tool>
          <Tool><CurvedRatsIcon /></Tool>
          <HSep />
          <Tool><NetColorIcon /></Tool>
          <Tool><ContrastIcon /></Tool>
          <HSep />
          <Tool on><ZoneIcon /></Tool>
          <Tool><ZoneOutlineIcon /></Tool>
          <HSep />
        </div>
        <div className="flex w-[1620px] shrink-0 flex-col border border-[#a0a0a0]">
          <div className="flex">
            <Board />
            <div className="flex flex-1 justify-end">
              <div className="mr-[7px] mt-[361px] h-[26px] w-[11px] bg-[#868686]" />
            </div>
          </div>
          <div className="ml-[802px] mt-2 h-[11px] w-[98px] bg-[#868686]" />
        </div>
        <div className="flex w-[57px] shrink-0 flex-col pr-px pt-[6px]">
          <Tool on><ArrowIcon /></Tool>
          <Tool><HighlightNetIcon /></Tool>
          <HSep />
          <Tool><FootprintIcon /></Tool>
          <Tool corner><RouteIcon /></Tool>
          <Tool corner><TuneIcon /></Tool>
          <Tool><ViaIcon /></Tool>
          <Tool><AddZoneIcon /></Tool>
          <Tool><RuleAreaIcon /></Tool>
          <HSep />
          <Tool><LineIcon /></Tool>
          <Tool><ArcIcon /></Tool>
          <Tool><RectIcon /></Tool>
          <Tool><CircleIcon /></Tool>
          <Tool><PolyIcon /></Tool>
        </div>
        <RightPanel />
      </main>

      <section className="flex h-[50px] shrink-0 border-b border-[#d7d7d7] pl-[17px] text-[17px]">
        {info.map(([a, b, w]) => (
          <div key={a} className={`flex shrink-0 flex-col gap-2 whitespace-nowrap pt-[5px] ${w}`}>
            <span>{a}</span>
            <span>{b}</span>
          </div>
        ))}
      </section>

      <footer className="flex h-[33px] shrink-0 items-center text-[17px]">
        {status.map(([t, w]) => (
          <div key={t} className={`flex h-[30px] shrink-0 items-center whitespace-pre border-r border-[#d7d7d7] pt-[4px] ${w}`}>{t}</div>
        ))}
        <div className="flex flex-1 items-end justify-end self-stretch pb-[3px] pr-[2px]">
          <svg viewBox="0 0 12 12" className="h-3 w-3" fill="#b4b4b4"><path d="M8 0h3v3H8zM8 4h3v3H8zM4 4h3v3H4zM8 8h3v3H8zM4 8h3v3H4zM0 8h3v3H0z" /></svg>
        </div>
      </footer>

      <div className="flex h-[72px] shrink-0 items-center border-t-2 border-[#454344] bg-[#231f20] pb-px">
        <div className="flex w-[1180px] shrink-0 items-center pl-[777px]">
          <svg viewBox="0 0 35 35" className="h-[35px] w-[35px] shrink-0">
            <defs>
              <linearGradient id="win" x1="0" y1="0" x2="1" y2="1"><stop offset="0" stopColor="#8fdcff" /><stop offset=".4" stopColor="#4cc8fb" /><stop offset="1" stopColor="#0a9dff" /></linearGradient>
            </defs>
            <path d="M1 0h16v17H0V1zM18 0h16l1 1v16H18zM0 18h17v17H1l-1-1zM18 18h17v16l-1 1H18z" fill="url(#win)" />
          </svg>
          <div className="relative ml-8 shrink-0">
            <svg viewBox="0 0 36 34" className="h-[34px] w-9">
              <defs>
                <linearGradient id="fold" x1="0" y1="0" x2="1" y2="1"><stop offset="0" stopColor="#ffda6e" /><stop offset="1" stopColor="#f7b40c" /></linearGradient>
              </defs>
              <path d="M0 1q0-1 1-1h10l4 3v7H0z" fill="#d99a08" />
              <path d="M0 6h11l4-3h20l1 1v29H0z" fill="url(#fold)" />
              <path d="M6 33v-7q0-4 4-4h16q4 0 4 4v7z" fill="#0b6fc6" />
              <path d="M11 27h14" stroke="#0a4a8c" strokeWidth="1.500" />
            </svg>
            <div className="absolute -bottom-3 left-[14px] h-[5px] w-[9px] rounded-full bg-[#9a9898]" />
          </div>
          <div className="relative ml-[32px] flex h-9 w-[32px] shrink-0 items-center justify-center">
            <div className="absolute left-[7px] top-[7px] h-[21px] w-[18px] rounded-b-full bg-white" />
            <SiBrave className="relative h-9 w-9 shrink-0 text-[#fb3c12]" />
            <div className="absolute -bottom-[11px] left-[12px] h-[5px] w-[9px] rounded-full bg-[#9a9898]" />
          </div>
          <div className="relative ml-8 h-[35px] w-[35px] shrink-0">
            <div className="absolute inset-[2px] rounded-full bg-white" />
            <svg className="absolute h-0 w-0"><defs><linearGradient id="steam" x1="0" y1="0" x2="0" y2="1"><stop offset="0" stopColor="#111d3a" /><stop offset=".5" stopColor="#0a2f5c" /><stop offset="1" stopColor="#1387b8" /></linearGradient></defs></svg>
            <FaSteam className="relative h-[35px] w-[35px] [&_path]:fill-[url(#steam)]" />
          </div>
          <div className="relative ml-8 h-[35px] w-[35px] shrink-0">
            <div className="absolute inset-1 rounded-full bg-black" />
            <FaSpotify className="relative h-[35px] w-[35px] text-[#1ed760]" />
          </div>
          <div className="relative ml-[18px] flex h-[60px] w-[59px] shrink-0 items-center rounded-[6px] border border-[#3b3838] bg-[#2c2829]">
            <div className="relative flex h-[60px] w-[53px] shrink-0 items-center justify-center rounded-[6px] border border-[#444142] bg-[#353132] pl-px">
              <div className="ml-[2px] flex h-[35px] w-[35px] items-center justify-center rounded-[6px] bg-[#2b3fbf]">
                <span className="relative text-[26px] font-bold leading-none tracking-tight text-white">
                  Ki
                  <span className="absolute right-0 top-[1px] h-[6px] w-[6px] rounded-full bg-[#ff7a00]" />
                </span>
              </div>
              <div className="absolute bottom-[1px] left-[17px] h-[5px] w-6 rounded-full bg-[#f47a60]" />
            </div>
          </div>
        </div>
        <div className="flex flex-1 items-center justify-end pr-[30px]">
          <svg viewBox="0 0 17 10" className="mr-7 h-[10px] w-[17px]" fill="none" stroke="#fff" strokeWidth="2"><path d="M1 9l7.500-7L16 9" /></svg>
          <svg viewBox="0 0 24 20" className="mr-3 h-5 w-6" fill="none" stroke="#fff" strokeWidth="1.800">
            <path d="M1 7.500C7-.500 17-.500 23 7.500M4 11c4-5.500 12-5.500 16 0M7.500 14c2.500-3 6.500-3 9 0" />
            <circle cx="12" cy="17" r="2" fill="#fff" stroke="none" />
          </svg>
          <svg viewBox="0 0 24 20" className="mr-3 h-5 w-6" fill="none" stroke="#fff" strokeWidth="1.600">
            <path d="M1 7h4l5-5v16l-5-5H1zM13 6c2 2 2 6 0 8M16 4c4 3 4 9 0 12M19 1.500c5 4 5 13 0 17" />
          </svg>
          <svg viewBox="0 0 24 18" className="mr-[23px] h-[18px] w-6" fill="none" stroke="#fff" strokeWidth="1.800">
            <rect x="1" y="1.500" width="19" height="14" rx="3" />
            <rect x="4" y="4.500" width="11" height="8" fill="#fff" stroke="none" />
            <path d="M22.500 6v5" />
          </svg>
          <div className="flex w-[85px] flex-col items-end gap-[7px] pb-[2px] text-[17px] tracking-[.25px] text-white">
            <span>14:10</span>
            <span>31/3/2023</span>
          </div>
          <div className="ml-[11px] flex h-6 w-6 items-center justify-center rounded-full bg-[#f47a60] text-[15px] text-[#231f20]">1</div>
        </div>
      </div>
    </div>
  );
}
